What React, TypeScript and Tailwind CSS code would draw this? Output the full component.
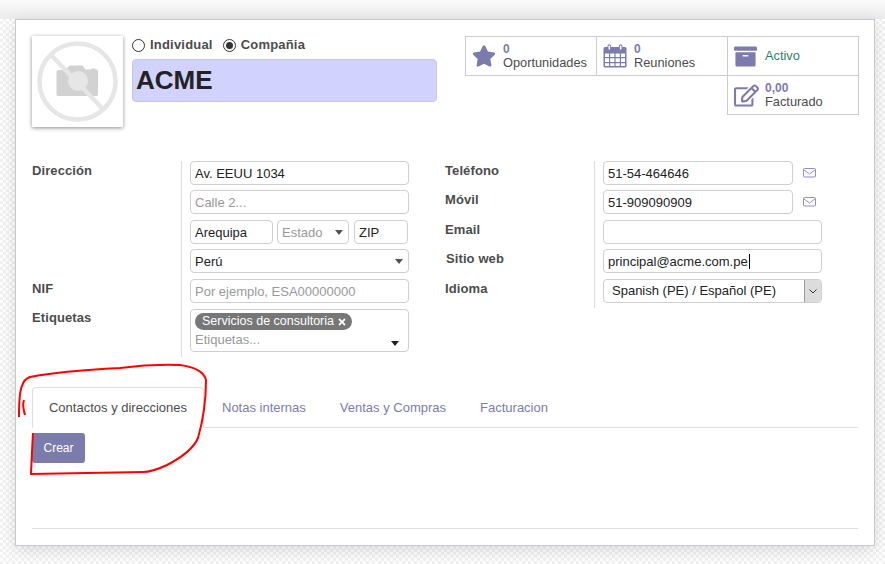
import React from 'react';
import { FaArchive, FaRegEdit, FaStar, FaTimes } from 'react-icons/fa';

const fieldBox = 'h-[24px] rounded-[4px] border border-[#cfcfcf] bg-white px-[4px] text-[13px] text-[#222] outline-none placeholder:text-[#999]';
const labelText = 'text-[13px] leading-[20px] font-bold tracking-[0.1px] text-[#4c4c4c]';

const Field: React.FC<{ value?: string; placeholder?: string; className?: string }> = ({ value, placeholder, className = 'w-full' }) => (
  <input readOnly value={value ?? ''} placeholder={placeholder} className={`${fieldBox} ${className} block`} />
);

const Caret: React.FC = () => (
  <svg width="8" height="5" viewBox="0 0 8 5" className="absolute right-[5px] top-[9px]">
    <path d="M0 0h8L4 5z" fill="#555" />
  </svg>
);

const SelectField: React.FC<{ value?: string; placeholder?: string; className?: string }> = ({ value, placeholder, className = 'w-full' }) => (
  <div className={`${fieldBox} ${className} relative leading-[24px]`}>
    {value ? value : <span className="text-[#999]">{placeholder}</span>}
    <Caret />
  </div>
);

const CalendarIcon: React.FC = () => (
  <svg width="24" height="24" viewBox="0 0 24 24" fill="#7c7bad">
    <path fillRule="evenodd" d="M2 3h2.500V2a1.800 1.800 0 0 1 3.600 0v1h7.800V2a1.800 1.800 0 0 1 3.600 0v1H22a1.500 1.500 0 0 1 1.500 1.500V22a1.500 1.500 0 0 1-1.500 1.500H2A1.500 1.500 0 0 1 .5 22V4.500A1.500 1.500 0 0 1 2 3zm0 6.500V13h4V9.500zm5.200 0V13h4.200V9.500zm5.400 0V13h4.200V9.500zm5.400 0V13h4V9.500zM2 14.200V18h4v-3.800zm5.200 0V18h4.200v-3.800zm5.400 0V18h4.200v-3.800zm5.400 0V18h4v-3.800zM2 19.200V22h4v-2.800zm5.200 0V22h4.200v-2.800zm5.400 0V22h4.200v-2.800zm5.400 0V22h4v-2.800z" />
    <path d="M5.500 1.500h1.600v4H5.500zM16.900 1.500h1.600v4h-1.600z" fill="#fff" />
  </svg>
);

const EnvelopeIcon: React.FC = () => (
  <svg width="13" height="11" viewBox="0 0 13 11" fill="none" stroke="#8f8ec6" strokeWidth="1">
    <rect x="0.500" y="1.500" width="12" height="8.500" rx="1" />
    <path d="M0.500 2.500 6.500 7l6-4.500" />
  </svg>
);

const StatButton: React.FC<{ icon: React.ReactNode; value?: string; label: string; green?: boolean; className?: string }> = ({ icon, value, label, green, className = '' }) => (
  <div className={`flex h-[40px] w-[132px] items-center border border-[#ccc] pl-[6px] ${className}`}>
    <div className="flex w-[31px] shrink-0 justify-start">{icon}</div>
    <div className="text-[12.800px] leading-[14px]">
      {value && <div className="text-[12px] font-bold text-[#7c7bad]">{value}</div>}
      {green ? <div className="text-[#2f7f5f]">{label}</div> : <div className="text-[#4c4c4c]">{label}</div>}
    </div>
  </div>
);

const Radio: React.FC<{ checked?: boolean; label: string }> = ({ checked, label }) => (
  <div className="flex items-center gap-[5px]">
    <span className="flex h-[13px] w-[13px] items-center justify-center rounded-full border border-[#333] bg-white">
      {checked && <span className="h-[7px] w-[7px] rounded-full bg-[#333]" />}
    </span>
    <span className={`${labelText} tracking-[0.2px]`}>{label}</span>
  </div>
);

const App: React.FC = () => (
  <div className="relative h-[564px] w-[885px] overflow-hidden bg-[repeating-conic-gradient(#f2f2f2_0%_25%,#ffffff_0%_50%)] bg-[length:6px_6px] pl-[15px] pt-[19px] font-['Liberation_Sans',Arial,sans-serif]">
    <div className="absolute left-0 top-0 h-[19px] w-full bg-gradient-to-b from-[#fafafa] to-[#ececec]" />
    <div className="relative flex h-[527px] w-[860px] flex-col border border-[#c8c8d0] bg-white pl-[16px] pr-[16px] pt-[16px] shadow-[0_4px_16px_rgba(0,0,0,0.14)]">
      {/* header */}
      <div className="flex h-[125px] items-start">
        <div className="flex h-[91px] w-[91px] shrink-0 items-center justify-center bg-white shadow-[0_1px_4px_rgba(0,0,0,0.45)]">
          <svg width="82" height="82" viewBox="0 0 82 82" className="blur-[0.4px]">
            <path fill="#d2d2d2" d="M19.500 31a2 2 0 0 1 2-2h7l4-4.500h13l3 4h6v-1h4v1a2 2 0 0 1 2.500 2v23a1.500 1.500 0 0 1-1.500 1.500H21a1.500 1.500 0 0 1-1.500-1.500z" />
            <circle cx="41" cy="40" r="10" fill="#e6e6e6" />
            <circle cx="40.500" cy="40.500" r="38" fill="none" stroke="#e6e6e6" strokeWidth="4.500" />
            <path d="M15 15 65 67" stroke="#e6e6e6" strokeWidth="4.500" />
          </svg>
        </div>
        <div className="ml-[9px] w-[305px] shrink-0">
          <div className="flex h-[18px] items-center gap-[10px]">
            <Radio label="Individual" />
            <Radio checked label="Compañia" />
          </div>
          <input
            readOnly
            value="ACME"
            className="mt-[5px] block h-[43px] w-full rounded-[4px] border border-[#c8c8dc] bg-[#d2d2ff] px-[3px] text-[26px] font-bold text-[#222] outline-none"
          />
        </div>
        <div className="ml-[28px] flex w-[394px] flex-wrap">
          <StatButton icon={<FaStar size={24} color="#7c7bad" />} value="0" label="Oportunidades" />
          <StatButton icon={<CalendarIcon />} value="0" label="Reuniones" className="-ml-px" />
          <StatButton icon={<FaArchive size={23} color="#7c7bad" />} label="Activo" green className="-ml-px" />
          <StatButton icon={<FaRegEdit size={25} color="#7c7bad" />} value="0,00" label="Facturado" className="-mt-px ml-[262px]" />
        </div>
      </div>

      {/* form */}
      <div className="flex h-[226px] items-start">
        <div className="flex w-[413px] shrink-0">
          <div className={`w-[149px] shrink-0 ${labelText}`}>
            <div className="h-[118px]">Dirección</div>
            <div className="h-[29px]">NIF</div>
            <div>Etiquetas</div>
          </div>
          <div className="grid h-[196px] w-[228px] grid-rows-[24px_25px_24px_25px_25px_43px] gap-[5px] border-l border-[#ddd] pl-[8px]">
            <Field value="Av. EEUU 1034" />
            <Field placeholder="Calle 2..." />
            <div className="flex">
              <Field value="Arequipa" className="w-[83px]" />
              <SelectField placeholder="Estado" className="ml-[4px] w-[72px]" />
              <Field value="ZIP" className="ml-[5px] w-[54px]" />
            </div>
            <SelectField value="Perú" />
            <Field placeholder="Por ejemplo, ESA00000000" />
            <div className="relative h-[43px] rounded-[4px] border border-[#cfcfcf] px-[4px] pt-[3px]">
              <div className="flex h-[17px] w-[157px] items-center gap-[3px] rounded-full bg-[#777] pl-[7px] text-[12.500px] text-white">
                Servicios de consultoria <FaTimes size={10} />
              </div>
              <div className="pt-[1px] text-[13px] leading-[17px] text-[#999]">Etiquetas...</div>
              <svg width="8" height="5" viewBox="0 0 8 5" className="absolute right-[9px] top-[31px]">
                <path d="M0 0h8L4 5z" fill="#222" />
              </svg>
            </div>
          </div>
        </div>
        <div className="flex w-[413px]">
          <div className={`w-[149px] shrink-0 ${labelText}`}>
            <div className="h-[29px]">Teléfono</div>
            <div className="h-[30px]">Móvil</div>
            <div className="h-[29px]">Email</div>
            <div className="h-[30px] pl-[1px]">Sitio web</div>
            <div>Idioma</div>
          </div>
          <div className="grid h-[147px] w-[228px] grid-rows-[24px_25px_24px_25px_25px] gap-[5px] border-l border-[#ddd] pl-[8px]">
            <div className="flex items-start">
              <Field value="51-54-464646" className="w-[190px]" />
              <span className="ml-[10px] mt-[6px]"><EnvelopeIcon /></span>
            </div>
            <div className="flex items-start">
              <Field value="51-909090909" className="w-[190px]" />
              <span className="ml-[10px] mt-[6px]"><EnvelopeIcon /></span>
            </div>
            <Field />
            <div className={`${fieldBox} w-[219px] leading-[24px]`}>
              principal@acme.com.pe<span className="ml-[1px] inline-block h-[15px] w-px translate-y-[3px] bg-black" />
            </div>
            <div className={`${fieldBox} relative w-[219px] pl-[8px] leading-[22px]`}>
              Spanish (PE) / Español (PE)
              <div className="absolute right-0 top-0 flex h-[22px] w-[17px] items-center justify-center rounded-r-[3px] border-l border-[#999] bg-[#dcdcdc]">
                <svg width="8" height="5" viewBox="0 0 8 5" fill="none" stroke="#333"><path d="M0.500 0.500 4 4l3.500-3.500" /></svg>
              </div>
            </div>
          </div>
        </div>
      </div>

      {/* tabs */}
      <div className="flex h-[41px] items-end border-b border-[#ddd] text-[13px]">
        <div className="-mb-px flex h-[41px] w-[172px] items-center justify-center rounded-t-[4px] border border-b-white border-[#ddd] bg-white pt-[1px] text-[#4c4c4c]">
          Contactos y direcciones
        </div>
        <div className="flex h-[40px] items-center gap-[34px] pl-[18px] pt-[1px] text-[#7c7bad]">
          <span>Notas internas</span>
          <span>Ventas y Compras</span>
          <span>Facturacion</span>
        </div>
      </div>
      <button className="mt-[5px] h-[30px] w-[53px] rounded-[3px] bg-[#7c7bad] text-[12px] text-white">Crear</button>
      <div className="mt-[65px] border-t border-[#ddd]" />
    </div>

    {/* hand-drawn annotation on the screenshot */}
    <svg width="885" height="564" viewBox="0 0 885 564" fill="none" stroke="#f00" strokeWidth="2" className="pointer-events-none absolute left-0 top-0">
      <path d="M19 417Q19 392 22 386Q24 379 30 377Q60 371 120 368Q150 364 180 365Q203 368 206 380Q206 410 198 438Q192 452 167 465Q152 472 143 472L31 474Q32 450 33 433" />
      <path d="M24 400Q22 405 25 415" />
    </svg>
  </div>
);

export default App;
